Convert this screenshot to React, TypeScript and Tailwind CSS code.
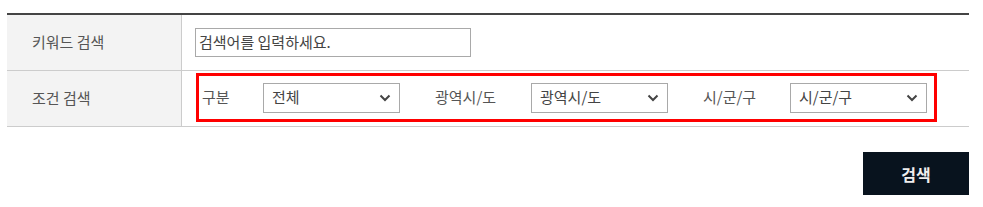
import React from "react";

const Chevron = () => (
  <svg width="12" height="8" viewBox="0 0 12 8" className="shrink-0">
    <polyline
      points="1.5,1.5 6,6 10.5,1.5"
      fill="none"
      stroke="#444"
      strokeWidth="2"
    />
  </svg>
);

type SelectBoxProps = {
  value: string;
};

const SelectBox = ({ value }: SelectBoxProps) => (
  <div className="flex h-[30px] w-[137px] items-center justify-between border border-[#a9a9a9] bg-white pl-[8px] pr-[8px] text-[15px] text-[#444]">
    <span>{value}</span>
    <Chevron />
  </div>
);

const rows = [
  { label: "구분", width: "w-[61px]", value: "전체" },
  { label: "광역시/도", width: "w-[96px]", value: "광역시/도" },
  { label: "시/군/구", width: "w-[87px]", value: "시/군/구" },
];

export default function App() {
  return (
    <div
      className="w-[983px] bg-white pt-[13px] pl-[7px]"
      style={{ fontFamily: '"Noto Sans CJK KR", "Noto Sans", sans-serif' }}
    >
      <div className="w-[962px] border-t-2 border-[#444]">
        <div className="grid grid-cols-[175px_1fr] border-b border-[#ccc]">
          <div className="flex h-[55px] items-center border-r border-[#ccc] bg-[#f3f3f3] pl-[25px] text-[15px] text-[#555]">
            키워드 검색
          </div>
          <div className="flex items-center pl-[13px]">
            <div className="flex h-[29px] w-[276px] items-center border border-[#a9a9a9] pl-[3px] text-[15px] text-[#444]">
              검색어를 입력하세요.
            </div>
          </div>
        </div>
        <div className="grid grid-cols-[175px_1fr] border-b border-[#ccc]">
          <div className="flex h-[55px] items-center border-r border-[#ccc] bg-[#f3f3f3] pl-[25px] text-[15px] text-[#555]">
            조건 검색
          </div>
          <div className="flex items-start pt-[2px] pl-[14px]">
            <div className="flex h-[49px] w-[741px] items-center border-[3px] border-[#ff0000] pl-[3px]">
              {rows.map((r, i) => (
                <div
                  key={r.label}
                  className={`flex items-center ${i > 0 ? "ml-[35px]" : ""}`}
                >
                  <span className={`${r.width} text-[15px] text-[#555]`}>
                    {r.label}
                  </span>
                  <SelectBox value={r.value} />
                </div>
              ))}
            </div>
          </div>
        </div>
        <div className="flex justify-end pt-[25px]">
          <button className="flex h-[43px] w-[106px] items-center justify-center bg-[#08131e] text-[16px] font-bold text-[#eee]">
            검색
          </button>
        </div>
      </div>
    </div>
  );
}
